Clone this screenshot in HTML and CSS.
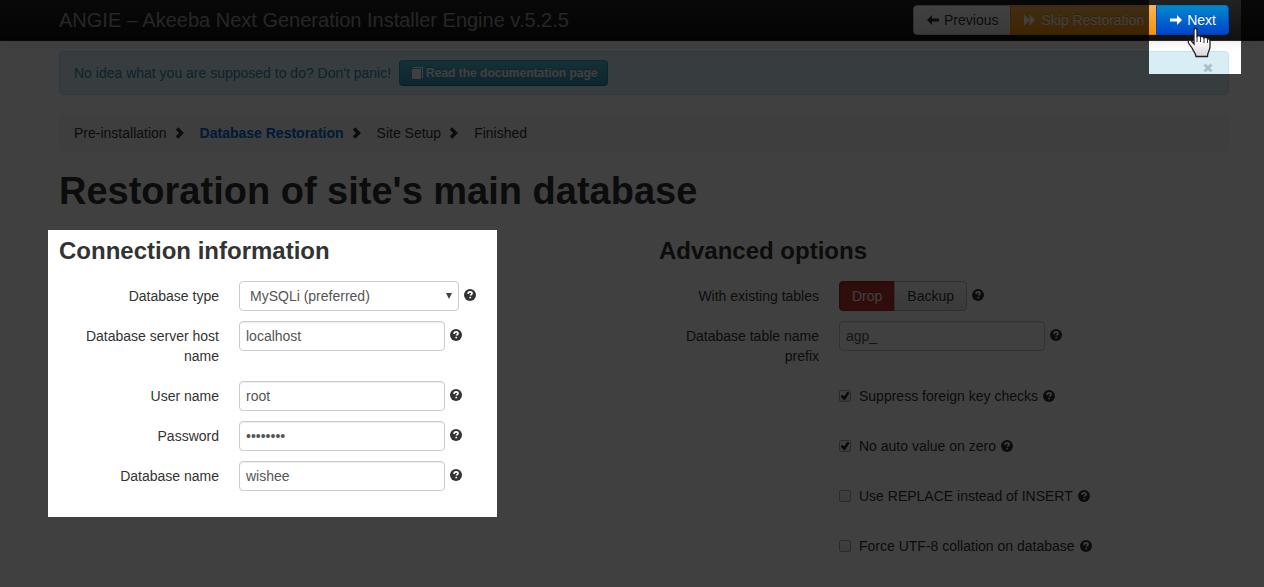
FILE: index.html
```html
<!DOCTYPE html>
<html lang="en">
<head>
<meta charset="utf-8">
<title>ANGIE – Akeeba Next Generation Installer Engine v.5.2.5</title>
<link rel="stylesheet" href="styles.css">
</head>
<body>
<svg class="sprite" aria-hidden="true">
  <symbol id="help" viewBox="0 0 12 12"><circle cx="6" cy="6" r="6" fill="currentColor"/><path d="M4.200 4.900V4.500C4.200 3.400 5 2.800 6.100 2.800s1.900.6 1.900 1.600c0 1.300-1.500 1.200-1.500 2.100" fill="none" stroke="#fff" stroke-width="1.700"/><path d="M5.400 7.800h1.700v1.500H5.400z" fill="#fff"/></symbol>
  <symbol id="chevron" viewBox="0 0 10 12"><path d="M2 1.500L6.500 6 2 10.500" fill="none" stroke="currentColor" stroke-width="3.500"/></symbol>
</svg>
<header class="navbar">
  <div class="container navbar-inner">
    <span class="brand">ANGIE – Akeeba Next Generation Installer Engine v.5.2.5</span>
    <div class="btn-group">
      <button type="button" class="btn"><svg class="icon" viewBox="0 0 14 14"><path d="M1 7l5-5v3.500h7v3H6V12z" fill="currentColor"/></svg>Previous</button>
      <button type="button" class="btn btn-warning"><svg class="icon" viewBox="0 0 14 14"><path d="M1 1.500L6.500 7 1 12.500zM6.500 1.500L12 7l-5.500 5.500z" fill="currentColor"/></svg>Skip Restoration</button>
      <button type="button" class="btn btn-primary"><svg class="icon" viewBox="0 0 14 14"><path d="M13 7L8 2v3.500H1v3h7V12z" fill="currentColor"/></svg>Next</button>
    </div>
  </div>
</header>
<main class="container">
  <div class="alert">
    <span>No idea what you are supposed to do? Don't panic!</span>
    <a href="#" class="btn btn-small btn-info"><svg class="icon" viewBox="0 0 14 14"><path d="M3 1h10v11h-1V2H3z" fill="currentColor"/><path d="M2 3h9v10H2z" fill="currentColor"/></svg>Read the documentation page</a>
    <button type="button" class="close" aria-label="Close"><svg viewBox="0 0 10 10"><path d="M1.500 1.500l7 7M8.500 1.500l-7 7" stroke="currentColor" stroke-width="2.700"/></svg></button>
  </div>
  <ol class="breadcrumb">
    <li>Pre-installation<svg class="chevron"><use href="#chevron"/></svg></li>
    <li class="active">Database Restoration<svg class="chevron"><use href="#chevron"/></svg></li>
    <li>Site Setup<svg class="chevron"><use href="#chevron"/></svg></li>
    <li>Finished</li>
  </ol>
  <h1>Restoration of site's main database</h1>
  <form class="columns">
    <section>
      <h2>Connection information</h2>
      <div class="row"><label for="dbtype">Database type</label><div class="controls"><span class="select"><select id="dbtype"><option>MySQLi (preferred)</option></select></span><svg class="help"><use href="#help"/></svg></div></div>
      <div class="row"><label for="dbhost">Database server host name</label><div class="controls"><input class="text" type="text" id="dbhost" value="localhost"><svg class="help"><use href="#help"/></svg></div></div>
      <div class="row"><label for="dbuser">User name</label><div class="controls"><input class="text" type="text" id="dbuser" value="root"><svg class="help"><use href="#help"/></svg></div></div>
      <div class="row"><label for="dbpass">Password</label><div class="controls"><input class="text" type="password" id="dbpass" value="password"><svg class="help"><use href="#help"/></svg></div></div>
      <div class="row"><label for="dbname">Database name</label><div class="controls"><input class="text" type="text" id="dbname" value="wishee"><svg class="help"><use href="#help"/></svg></div></div>
    </section>
    <section>
      <h2>Advanced options</h2>
      <div class="row" role="group" aria-labelledby="existing"><span class="label" id="existing">With existing tables</span><div class="controls"><div class="btn-group"><button type="button" class="btn btn-danger">Drop</button><button type="button" class="btn">Backup</button></div><svg class="help"><use href="#help"/></svg></div></div>
      <div class="row"><label for="prefix">Database table name prefix</label><div class="controls"><input class="text" type="text" id="prefix" value="agp_"><svg class="help"><use href="#help"/></svg></div></div>
      <div class="check"><input type="checkbox" id="fk" checked><label for="fk">Suppress foreign key checks</label><svg class="help"><use href="#help"/></svg></div>
      <div class="check"><input type="checkbox" id="zero" checked><label for="zero">No auto value on zero</label><svg class="help"><use href="#help"/></svg></div>
      <div class="check"><input type="checkbox" id="replace"><label for="replace">Use REPLACE instead of INSERT</label><svg class="help"><use href="#help"/></svg></div>
      <div class="check"><input type="checkbox" id="utf8"><label for="utf8">Force UTF-8 collation on database</label><svg class="help"><use href="#help"/></svg></div>
    </section>
  </form>
</main>
<div class="shade"></div>
<svg class="pointer" viewBox="0 0 24 31" aria-hidden="true"><defs><linearGradient id="hand" x1="0" y1="0" x2="0" y2="1"><stop offset="0.400" stop-color="#fff"/><stop offset="1" stop-color="#d8d8d8"/></linearGradient></defs><path d="M7 3.500c0-3 3-3 3 0V10c.5-2 3.500-1.800 3.500.5.500-1.500 3.500-1.500 3.500 1 .5-1.500 3-1.500 3.500.500 1-.5 2.500.2 2.500 2V20c0 3-2.500 5-2.500 9.500H9C9 26 6 24 5 21L1.500 16c-1-2.500 1-3.500 2.500-2.500L7 17z" fill="url(#hand)" stroke="#222" stroke-width="1.300"/><path d="M10 9v6M13.500 10v5M17 11v5M20.500 12v4" stroke="#333"/></svg>
</body>
</html>
```
FILE: styles.css
```css
* { box-sizing: border-box; }
body {
  margin: 0;
  position: relative;
  min-height: 100vh;
  background: #fff;
  color: #333;
  font: 14px/20px "Liberation Sans", Arial, sans-serif;
}
button, input, select { font: inherit; margin: 0; }
.sprite { position: absolute; width: 0; height: 0; }
.container { padding: 0 35px 0 59px; }
.navbar {
  background: linear-gradient(#222, #111);
  border-bottom: 1px solid #252525;
  box-shadow: 0 1px 10px rgba(0, 0, 0, .1);
}
.navbar-inner {
  display: flex;
  align-items: center;
  justify-content: space-between;
  min-height: 40px;
}
.brand { font-size: 20px; color: #999; }
.btn-group { display: flex; }
.btn {
  display: inline-flex;
  align-items: center;
  padding: 4px 12px;
  border: 1px solid #bbb;
  border-radius: 4px;
  background: linear-gradient(#fff, #e6e6e6);
  color: #333;
  text-decoration: none;
  text-shadow: 0 1px 1px rgba(255, 255, 255, .75);
  white-space: nowrap;
}
.btn-group .btn { border-radius: 0; }
.btn-group .btn + .btn { margin-left: -1px; }
.btn-group .btn:first-child { border-radius: 4px 0 0 4px; }
.btn-group .btn:last-child { border-radius: 0 4px 4px 0; }
.btn-warning, .btn-primary, .btn-info, .btn-danger {
  color: #fff;
  text-shadow: 0 -1px 0 rgba(0, 0, 0, .25);
}
.btn-warning { background: linear-gradient(#fbb450, #f89406); border-color: #f9a937 #f89406 #d87f00; }
.btn-primary { background: linear-gradient(#08c, #04c); border-color: #0077b3 #04c #003cb3; }
.btn-info { background: linear-gradient(#5bc0de, #2f96b4); border-color: #46a5c2 #2f96b4 #24748c; }
.btn-danger { background: #bd362f; border-color: #a52b25; box-shadow: inset 0 2px 4px rgba(0, 0, 0, .15); }
.btn-small { padding: 2px 10px; font-size: 12px; font-weight: bold; }
.icon { width: 14px; height: 14px; margin-right: 4px; }
.btn-small .icon { margin-right: 2px; }
.alert {
  display: flex;
  align-items: center;
  gap: 8px;
  margin: 10px 0 20px;
  padding: 8px 14px;
  border: 1px solid #bce8f1;
  border-radius: 4px;
  background: #d9edf7;
  color: #3a87ad;
}
.close {
  align-self: flex-start;
  width: 12px;
  height: 16px;
  margin-left: auto;
  padding: 3px 1px;
  border: 0;
  background: none;
  color: #000;
  opacity: .2;
}
.close svg { display: block; width: 10px; height: 10px; }
.breadcrumb {
  display: flex;
  margin: 0 0 20px;
  padding: 8px 15px;
  border-radius: 4px;
  background: #f5f5f5;
  list-style: none;
}
.breadcrumb li { display: flex; align-items: center; }
.breadcrumb .active { color: #0069d6; font-weight: bold; }
.chevron { width: 10px; height: 12px; margin: 0 15px 0 8px; color: #333; }
h1 { margin: 0 0 20px; font-size: 38px; line-height: 40px; }
h2 { margin: 0 0 10px; font-size: 24px; line-height: 40px; }
.columns { display: grid; grid-template-columns: 1fr 1fr; gap: 30px; }
.row {
  display: grid;
  grid-template-columns: 160px 1fr;
  gap: 20px;
  align-items: start;
  margin-bottom: 10px;
}
.row > label, .label { padding-top: 5px; text-align: right; }
.row > label { padding-bottom: 5px; }
.controls { display: flex; align-items: center; gap: 5px; }
.text, select {
  height: 30px;
  border: 1px solid #ccc;
  border-radius: 4px;
  background: #fff;
  color: #555;
}
.text { width: 206px; padding: 4px 6px; box-shadow: inset 0 1px 1px rgba(0, 0, 0, .075); }
select { width: 220px; padding: 4px 10px; appearance: none; }
.select { position: relative; display: flex; }
.select::after {
  content: "";
  position: absolute;
  right: 7px;
  top: 12px;
  border: 3px solid transparent;
  border-top: 6px solid #444;
  border-bottom: 0;
}
.help { width: 12px; height: 12px; color: #333; }
.controls .help { margin-bottom: 2px; }
.check {
  display: flex;
  align-items: center;
  min-height: 30px;
  margin-bottom: 20px;
  padding-left: 180px;
}
.check input {
  appearance: none;
  display: grid;
  place-items: center;
  width: 12px;
  height: 12px;
  margin-right: 8px;
  border: 1px solid #aaa;
  border-radius: 2px;
  background: linear-gradient(#fff, #e6e6e6);
}
.check input:checked::before {
  content: "";
  width: 9px;
  height: 9px;
  background: #222;
  clip-path: polygon(0 55%, 20% 35%, 40% 55%, 78% 0, 100% 16%, 45% 100%);
}
.check .help { margin-left: 5px; }
/* Dims the page except for the Next button and the connection form */
.shade {
  position: absolute;
  inset: 0;
  background: rgba(0, 0, 0, .75);
  pointer-events: none;
  clip-path: polygon(evenodd,
    0 0, 100% 0, 100% 100%, 0 100%, 0 0,
    48px 230px, 497px 230px, 497px 517px, 48px 517px, 48px 230px,
    0 0,
    calc(100% - 115px) 0, calc(100% - 23px) 0, calc(100% - 23px) 74px, calc(100% - 115px) 74px, calc(100% - 115px) 0,
    0 0);
}
.pointer { position: absolute; top: 27px; right: 53px; width: 24px; height: 31px; pointer-events: none; }
```
